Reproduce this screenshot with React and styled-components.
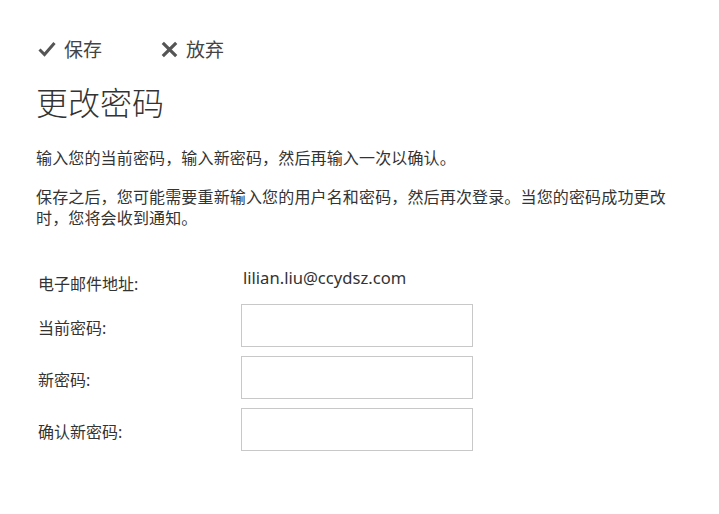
import React from 'react';
import styled, { createGlobalStyle } from 'styled-components';

const GlobalStyle = createGlobalStyle`
    body {
        margin: 0;
        background: #fff;
        color: #333;
        font-family: "Noto Sans", "Noto Sans CJK SC", sans-serif;
    }
`

const Page = styled.div`
    padding: 38px 0 40px 36px;
    width: 719px;
    box-sizing: border-box;
`

const Toolbar = styled.div`
    display: flex;
    align-items: center;
    gap: 59px;
    height: 22px;
    padding-left: 2px;
`

const ToolButton = styled.button`
    display: flex;
    align-items: center;
    gap: 8px;
    border: none;
    background: none;
    padding: 0;
    font-family: inherit;
    font-size: 19px;
    color: #444;
    cursor: pointer;

    svg {
        flex: none;
    }
`

const Title = styled.h1`
    margin: 23px 0 0;
    font-size: 32px;
    font-weight: 300;
    line-height: 40px;
    color: #333;
`

const Para = styled.p`
    margin: ${props => props.$top}px 0 0;
    max-width: 640px;
    font-size: 16px;
    line-height: 21px;
    letter-spacing: 0.15px;
    color: #333;
`

const Form = styled.div`
    display: grid;
    grid-template-columns: 203px 232px;
    row-gap: 9px;
    margin-top: 31px;
    padding-left: 2px;
`

const Label = styled.div`
    display: flex;
    align-items: center;
    font-size: 16px;
    color: #333;
    padding-top: ${props => props.$shift || 0}px;
`

const Value = styled.div`
    height: 34px;
    display: flex;
    align-items: center;
    padding-left: 2px;
    font-size: 16.6px;
    color: #333;
`

const Input = styled.input`
    width: 232px;
    height: 43px;
    box-sizing: border-box;
    border: 1px solid #c8c8c8;
    margin: 0;
    padding: 0 8px;
    font-size: 15px;
    background: #fff;
    outline: none;
`

const CheckIcon = () => (
    <svg width="18" height="16" viewBox="0 0 18 16">
        <path d="M1.5 8.5 L6.5 13.5 L16.5 2" fill="none" stroke="#555" strokeWidth="3" />
    </svg>
)

const CloseIcon = () => (
    <svg width="17" height="17" viewBox="0 0 17 17">
        <path d="M1.8 1.8 L15.2 15.2 M15.2 1.8 L1.8 15.2" fill="none" stroke="#555" strokeWidth="3.2" />
    </svg>
)

const fields = [
    { label: '当前密码:', name: 'current' },
    { label: '新密码:', name: 'new' },
    { label: '确认新密码:', name: 'confirm' },
]

const App = () => (
    <Page>
        <GlobalStyle />
        <Toolbar>
            <ToolButton><CheckIcon />保存</ToolButton>
            <ToolButton><CloseIcon />放弃</ToolButton>
        </Toolbar>
        <Title>更改密码</Title>
        <Para $top={25}>输入您的当前密码，输入新密码，然后再输入一次以确认。</Para>
        <Para $top={18}>保存之后，您可能需要重新输入您的用户名和密码，然后再次登录。当您的密码成功更改时，您将会收到通知。</Para>
        <Form>
            <Label $shift={11}>电子邮件地址:</Label>
            <Value>lilian.liu@ccydsz.com</Value>
            {fields.map(f => (
                <React.Fragment key={f.name}>
                    <Label $shift={2}>{f.label}</Label>
                    <Input type="password" name={f.name} />
                </React.Fragment>
            ))}
        </Form>
    </Page>
);

export default App;
